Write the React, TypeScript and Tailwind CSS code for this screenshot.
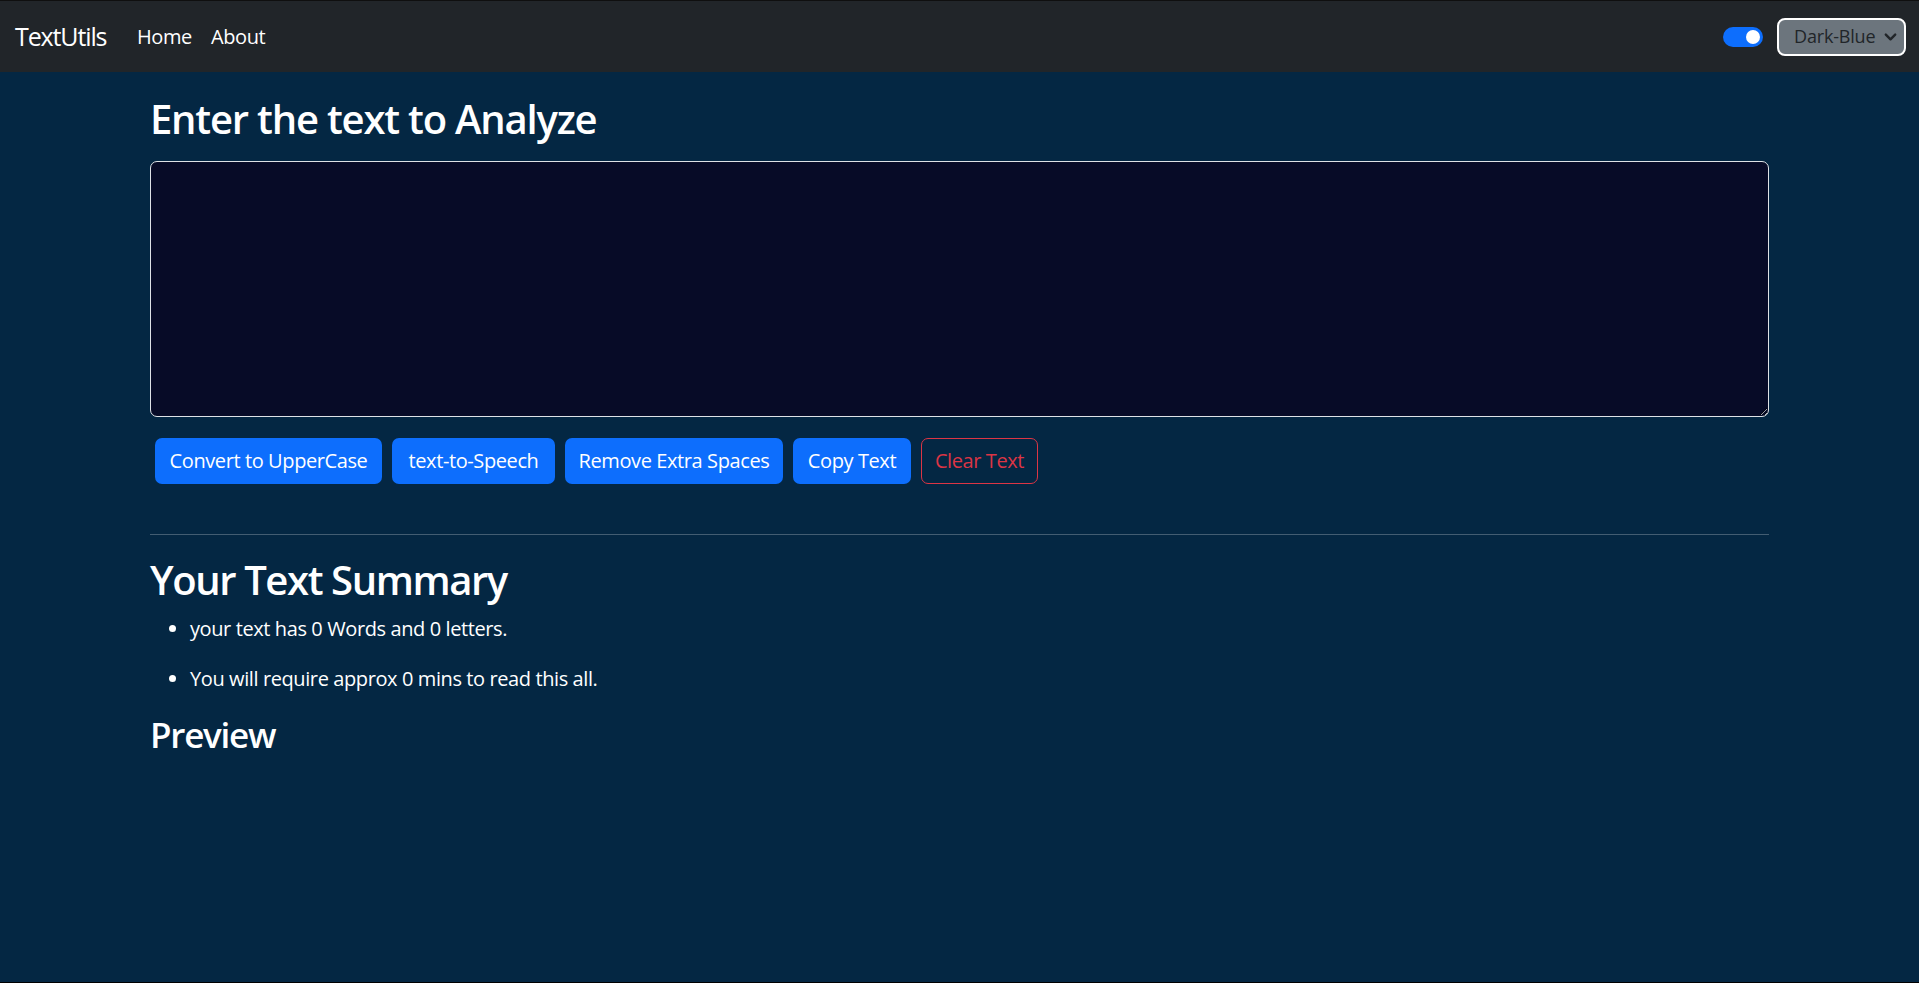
import { useState } from "react";

const buttons = [
  { label: "Convert to UpperCase", w: "w-[227px]" },
  { label: "text-to-Speech", w: "w-[163px]" },
  { label: "Remove Extra Spaces", w: "w-[218px]" },
  { label: "Copy Text", w: "w-[118px]" },
];

export default function App() {
  const [text, setText] = useState("");

  const words = text.split(/\s+/).filter((w) => w.length > 0).length;

  return (
    <div className="h-[983px] flex flex-col bg-[#042743] border-t border-[#0f0f0f] border-b border-b-black text-white font-['Open_Sans',sans-serif] tracking-[-0.025em]">
      {/* NAVBAR */}
      <nav className="h-[71px] shrink-0 bg-[#212529] flex items-center pl-[15px] pr-[13px]">
        <span className="w-[122px] text-[25px] tracking-[-0.045em]">TextUtils</span>
        <div className="flex items-center text-[20px]">
          <span className="w-[74px]">Home</span>
          <span>About</span>
        </div>

        <div className="ml-auto flex items-center gap-[14px]">
          <div className="w-[40px] h-[20px] rounded-full bg-[#0d6efd] flex items-center justify-end px-[3px]">
            <div className="w-[14px] h-[14px] rounded-full bg-white"></div>
          </div>

          <div className="w-[129px] h-[38px] rounded-[8px] border-2 border-white bg-[#6c757d] flex items-center pl-[15px] pr-[6px] text-[#212529] text-[18px] tracking-[-0.01em]">
            <span>Dark-Blue</span>
            <svg className="ml-auto" width="15" height="15" viewBox="0 0 16 16" fill="none">
              <path d="M3 6l5 5 5-5" stroke="#212529" strokeWidth="2.6" strokeLinecap="round" strokeLinejoin="round" />
            </svg>
          </div>
        </div>
      </nav>

      {/* MAIN */}
      <main className="flex-1 px-[150px] pt-[23px]">
        <h2 className="text-[40px] leading-[48px] font-semibold tracking-[-0.03em]">
          Enter the text to Analyze
        </h2>

        <textarea
          value={text}
          onChange={(e) => setText(e.target.value)}
          className="block mt-[18px] w-full h-[256px] rounded-[7px] border border-[#dee2e6] bg-[#070b27] text-white text-[20px] px-[15px] py-[8px] outline-none"
        />

        <div className="flex mt-[21px] gap-[10px] pl-[5px]">
          {buttons.map((b) => (
            <button
              key={b.label}
              className={`${b.w} h-[46px] rounded-[7px] bg-[#0d6efd] text-white text-[20px] flex items-center justify-center`}
            >
              {b.label}
            </button>
          ))}
          <button className="w-[117px] h-[46px] rounded-[7px] border border-[#dc3545] text-[#dc3545] text-[20px] flex items-center justify-center">
            Clear Text
          </button>
        </div>

        <hr className="mt-[50px] border-0 h-px bg-[#435d72]" />

        <h2 className="mt-[21px] text-[40px] leading-[48px] font-semibold tracking-[-0.035em]">
          Your Text Summary
        </h2>

        <ul className="mt-[10px] list-disc pl-[40px] text-[20px] leading-[30px]">
          <li className="mb-[20px]">
            your text has {words} Words and {text.length} letters.
          </li>
          <li className="mb-[20px]">
            You will require approx {0.008 * words} mins to read this all.
          </li>
        </ul>

        <h3 className="text-[35px] leading-[42px] font-semibold tracking-[-0.035em]">Preview</h3>
        <p className="text-[20px] leading-[30px]">{text}</p>
      </main>
    </div>
  );
}
